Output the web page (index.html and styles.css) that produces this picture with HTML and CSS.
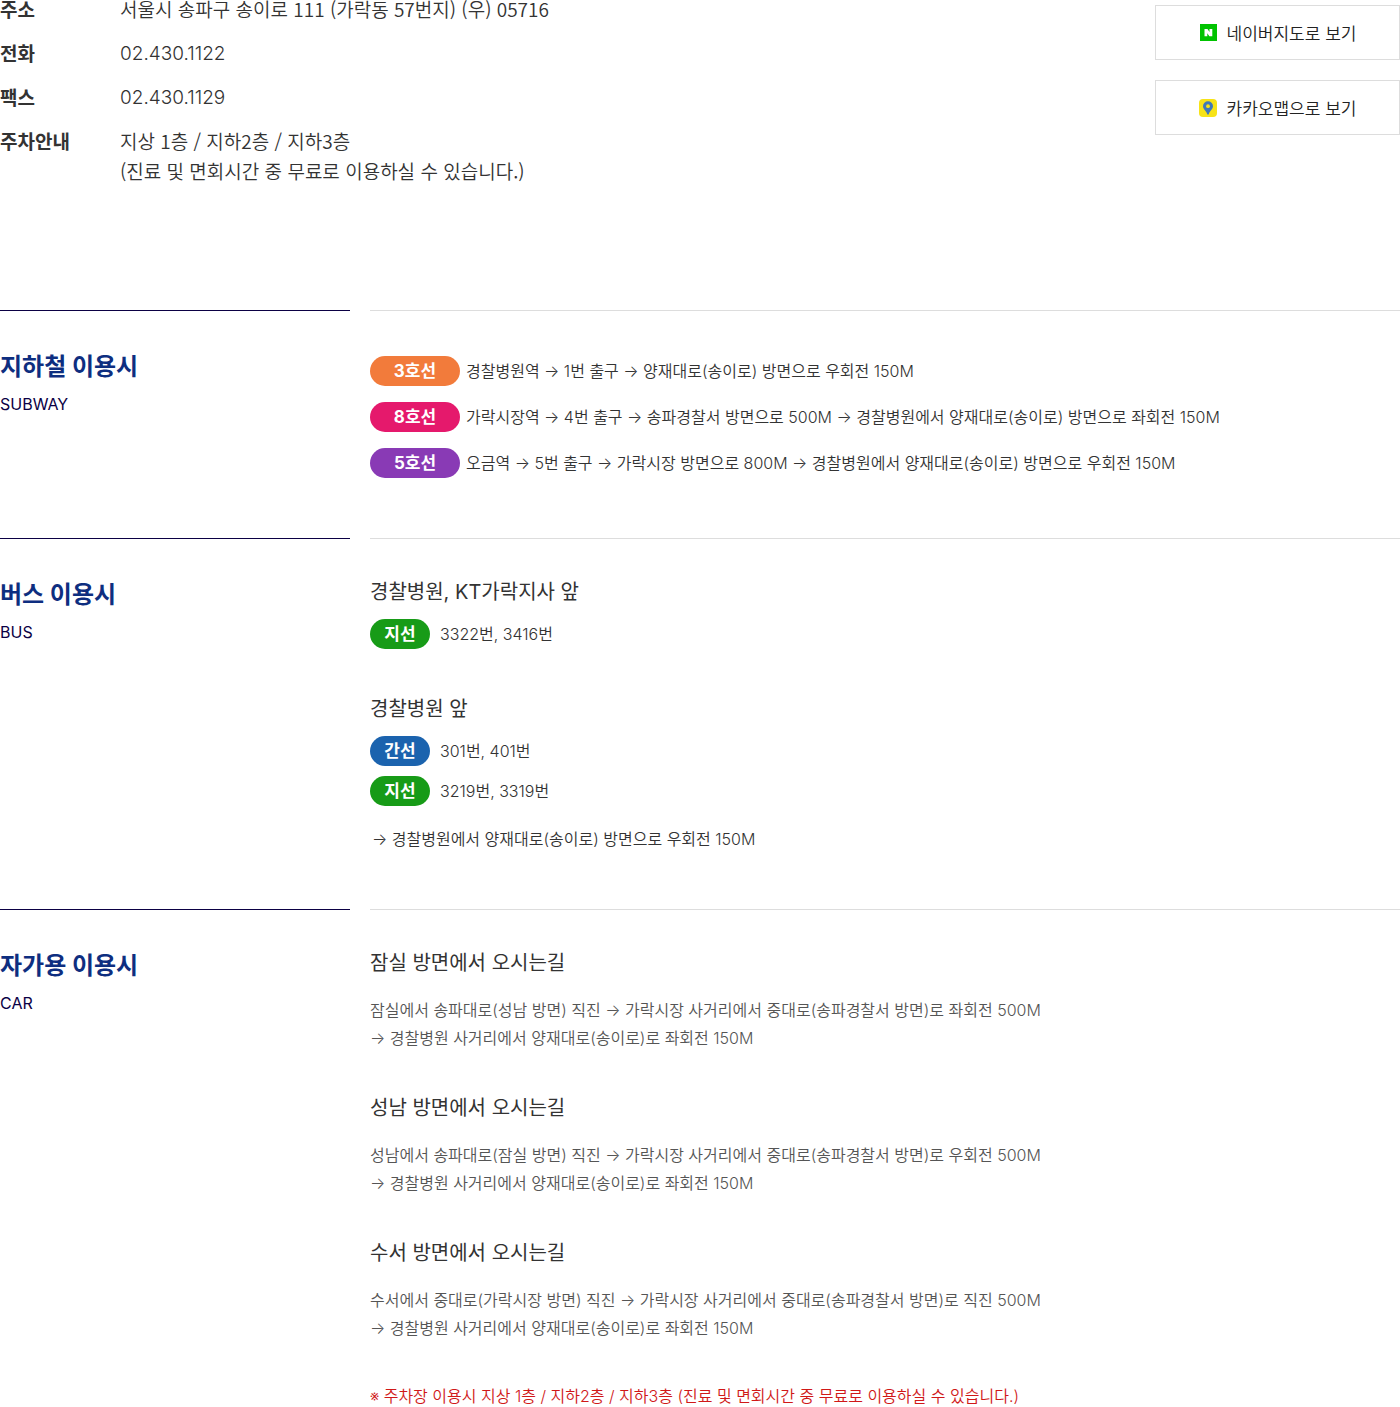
FILE: index.html
```
<!DOCTYPE html>
<html lang="ko">
<head>
  <meta charset="UTF-8">
  <meta name="viewport" content="width=device-width, initial-scale=1.0">
  <title>오시는길</title>
  <link rel="stylesheet" href="styles.css">
</head>
<body>

  <div class="location">
    <dl class="info">
      <dt>주소</dt>
      <dd>서울시 송파구 송이로 111 (가락동 57번지) (우) 05716</dd>
      <dt>전화</dt>
      <dd class="num">02.430.1122</dd>
      <dt>팩스</dt>
      <dd class="num">02.430.1129</dd>
      <dt>주차안내</dt>
      <dd>지상 1층 / 지하2층 / 지하3층<br>(진료 및 면회시간 중 무료로 이용하실 수 있습니다.)</dd>
    </dl>

    <div class="map-links">
      <a href="#">
        <svg width="18" height="18" viewBox="0 0 18 18" aria-hidden="true">
          <rect x="1" y="0" width="17" height="17" fill="#00c300"/>
          <path d="M5.500 5H8.500l2 3V5H13.300v7.300h-2.900L8.300 9.300v3H5.500z" fill="#fff"/>
        </svg>
        네이버지도로 보기
      </a>
      <a href="#">
        <svg width="18" height="18" viewBox="0 0 18 18" aria-hidden="true">
          <rect width="18" height="18" rx="4" fill="#f7e317"/>
          <path d="M9 2.300a5 5 0 0 0-5 5c0 3.200 3.300 4.300 4.300 8.200h1.400c1-3.900 4.300-5 4.300-8.200a5 5 0 0 0-5-5z" fill="#3f78b8"/>
          <circle cx="9" cy="7.200" r="1.900" fill="#f7e317"/>
        </svg>
        카카오맵으로 보기
      </a>
    </div>
  </div>

  <section class="route">
    <div class="route-title">
      <h2>지하철 이용시</h2>
      <p>SUBWAY</p>
    </div>
    <div class="route-body">
      <ul class="subway">
        <li><span class="badge line3">3호선</span>경찰병원역 → 1번 출구 → 양재대로(송이로) 방면으로 우회전 150M</li>
        <li><span class="badge line8">8호선</span>가락시장역 → 4번 출구 → 송파경찰서 방면으로 500M → 경찰병원에서 양재대로(송이로) 방면으로 좌회전 150M</li>
        <li><span class="badge line5">5호선</span>오금역 → 5번 출구 → 가락시장 방면으로 800M → 경찰병원에서 양재대로(송이로) 방면으로 우회전 150M</li>
      </ul>
    </div>
  </section>

  <section class="route">
    <div class="route-title">
      <h2>버스 이용시</h2>
      <p>BUS</p>
    </div>
    <div class="route-body">
      <h3>경찰병원, KT가락지사 앞</h3>
      <ul class="bus">
        <li><span class="badge green">지선</span>3322번, 3416번</li>
      </ul>
      <h3>경찰병원 앞</h3>
      <ul class="bus">
        <li><span class="badge blue">간선</span>301번, 401번</li>
        <li><span class="badge green">지선</span>3219번, 3319번</li>
      </ul>
      <p class="bus-walk">→ 경찰병원에서 양재대로(송이로) 방면으로 우회전 150M</p>
    </div>
  </section>

  <section class="route car">
    <div class="route-title">
      <h2>자가용 이용시</h2>
      <p>CAR</p>
    </div>
    <div class="route-body">
      <h3>잠실 방면에서 오시는길</h3>
      <p class="way">잠실에서 송파대로(성남 방면) 직진 → 가락시장 사거리에서 중대로(송파경찰서 방면)로 좌회전 500M<br>→ 경찰병원 사거리에서 양재대로(송이로)로 좌회전 150M</p>
      <h3>성남 방면에서 오시는길</h3>
      <p class="way">성남에서 송파대로(잠실 방면) 직진 → 가락시장 사거리에서 중대로(송파경찰서 방면)로 우회전 500M<br>→ 경찰병원 사거리에서 양재대로(송이로)로 좌회전 150M</p>
      <h3>수서 방면에서 오시는길</h3>
      <p class="way">수서에서 중대로(가락시장 방면) 직진 → 가락시장 사거리에서 중대로(송파경찰서 방면)로 직진 500M<br>→ 경찰병원 사거리에서 양재대로(송이로)로 좌회전 150M</p>
      <p class="notice">※ 주차장 이용시 지상 1층 / 지하2층 / 지하3층 (진료 및 면회시간 중 무료로 이용하실 수 있습니다.)</p>
    </div>
  </section>

</body>
</html>
```
FILE: styles.css
```
* {
  box-sizing: border-box;
  margin: 0;
  padding: 0;
}

body {
  font-family: Inter, 'Noto Sans CJK KR', sans-serif;
  font-size: 16px;
  font-weight: 350;
  color: #333;
  background-color: #fff;
}

ul {
  list-style: none;
}

/* 주소, 연락처 */
.location {
  display: flex;
  justify-content: space-between;
  align-items: flex-start;
  padding-bottom: 124px;
}

.info {
  display: grid;
  grid-template-columns: 120px 1fr;
  row-gap: 14px;
  margin-top: -6px;
  font-family: 'Noto Sans CJK KR', sans-serif;
  font-size: 19px;
  line-height: 30px;
}

.info dt {
  font-weight: 700;
}

.info .num {
  padding-top: 2px;
  font-family: Inter, sans-serif;
  font-weight: 300;
  line-height: 28px;
}

.map-links {
  display: flex;
  flex-direction: column;
  gap: 20px;
  width: 245px;
  padding-top: 5px;
}

.map-links a {
  display: flex;
  justify-content: center;
  align-items: center;
  gap: 10px;
  height: 55px;
  border: 1px solid #ddd;
  font-family: 'Noto Sans CJK KR', sans-serif;
  font-size: 17px;
  color: #222;
  text-decoration: none;
}

/* 교통편 */
.route {
  display: flex;
  gap: 20px;
}

.route-title {
  width: 25%;
  padding-top: 38px;
  border-top: 1px solid #0b0044;
}

.route-title h2 {
  margin-bottom: 7px;
  font-size: 24px;
  font-weight: 700;
  line-height: 36px;
  color: #0e2e80;
}

.route-title p {
  font-size: 16px;
  font-weight: 400;
  line-height: 24px;
  color: #0b0044;
}

.route-body {
  flex: 1;
  padding: 38px 0 60px;
  border-top: 1px solid #ddd;
}

.route-body h3 {
  font-size: 20px;
  font-weight: 400;
  line-height: 30px;
}

.badge {
  flex: none;
  border-radius: 15px;
  font-size: 17px;
  font-weight: 700;
  text-align: center;
  color: #fff;
}

.subway {
  display: flex;
  flex-direction: column;
  gap: 16px;
  padding-top: 7px;
}

.subway li,
.bus li {
  display: flex;
  line-height: 30px;
}

.subway li {
  gap: 6px;
}

.subway .badge {
  width: 90px;
}

.line3 { background-color: #f27b3b; }
.line8 { background-color: #e5196c; }
.line5 { background-color: #893ab5; }
.green { background-color: #179b17; }
.blue { background-color: #1b63ae; }

.bus {
  display: flex;
  flex-direction: column;
  gap: 10px;
  margin-top: 12px;
}

.bus + h3 {
  margin-top: 45px;
}

.bus li {
  gap: 10px;
}

.bus .badge {
  width: 60px;
}

.bus-walk {
  margin-top: 23px;
  padding-left: 2px;
  line-height: 20px;
}

.car .route-body {
  padding-bottom: 0;
}

.way {
  margin: 18px 0 41px;
  line-height: 28px;
  color: #555;
}

.notice {
  margin-top: 43px;
  line-height: 22px;
  color: #d01818;
}
```
